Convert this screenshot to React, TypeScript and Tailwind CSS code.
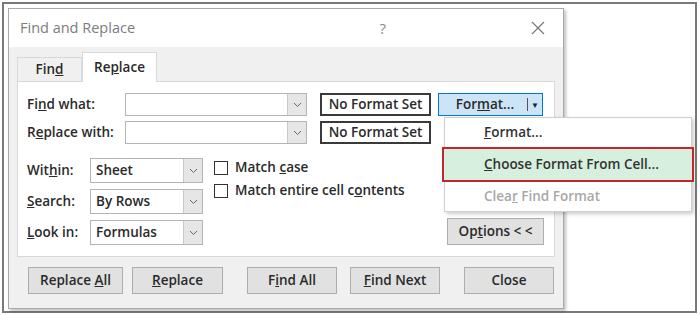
import React from 'react'

const font = { fontFamily: '"Open Sans", "Noto Sans", Arial, sans-serif' }

function Chevron() {
  return (
    <svg width="9" height="6" viewBox="0 0 9 6" className="text-[#666]">
      <path d="M1 1 L4.5 4.5 L8 1" fill="none" stroke="currentColor" strokeWidth="1" />
    </svg>
  )
}

function Combo({ w, value }: { w: string; value?: string }) {
  return (
    <div className={`${w} h-full flex border border-[#b4b4b4] bg-white`}>
      <div className="flex-1 flex items-center pl-[5px] text-[#2a2a2a]">{value}</div>
      <div className="w-[19px] flex items-center justify-center bg-[#e6e6e6] border-l border-[#c8c8c8]">
        <Chevron />
      </div>
    </div>
  )
}

function Btn({ children, w }: { children: React.ReactNode; w: string }) {
  return (
    <div className={`${w} h-[27px] flex items-center justify-center bg-[#e1e1e1] border border-[#adadad] text-[#2a2a2a]`}>
      <span>{children}</span>
    </div>
  )
}

export default function App() {
  return (
    <div className="w-[700px] h-[315px] bg-white p-[2px] text-[13.5px] font-semibold" style={font}>
      <div className="w-[695px] h-[311px] border-2 border-[#7a7a7a] p-[4px]">
        <div className="w-[556px] h-[301px] bg-[#f0f0f0] border border-[#a9a9a9] shadow-[2px_2px_3px_rgba(0,0,0,0.25)] flex flex-col">
          {/* title bar */}
          <div className="h-[38px] bg-white flex items-center pl-[11px] pr-[18px] text-[#7c7c7c] text-[14.5px] font-medium">
            <span className="flex-1">Find and Replace</span>
            <span className="text-[#8a8a8a] text-[15px] font-normal mr-[145px]">?</span>
            <svg width="14" height="14" viewBox="0 0 14 14">
              <path d="M1 1 L13 13 M13 1 L1 13" stroke="#777" strokeWidth="1.2" />
            </svg>
          </div>

          {/* tabs */}
          <div className="flex items-end pl-[8px] mt-[5px] h-[29px]">
            <div className="w-[65px] h-[24px] border border-b-0 border-[#d9d9d9] bg-[#f0f0f0] flex items-center justify-center text-[#2a2a2a]">
              <span>Fin<u>d</u></span>
            </div>
            <div className="w-[75px] h-[30px] border border-b-0 border-[#d9d9d9] bg-white flex items-center justify-center text-[#2a2a2a] -mb-px relative z-10">
              <span>Re<u>p</u>lace</span>
            </div>
          </div>

          {/* panel */}
          <div className="ml-[8px] w-[538px] h-[176px] bg-white border border-[#d9d9d9] pl-[9px] pt-[11px] relative text-[#2a2a2a]">
            <div className="flex items-center h-[23px]">
              <div className="w-[98px]">Fi<u>n</u>d what:</div>
              <Combo w="w-[182px]" />
              <div className="ml-[13px] w-[111px] h-full border-2 border-[#3a3a3a] flex items-center justify-center">No Format Set</div>
              <div className="ml-[7px] relative h-full">
                <div className="w-[105px] h-full bg-[#cce4f7] border border-[#0078d7] flex items-center">
                  <div className="flex-1 text-center pl-[4px]">For<u>m</u>at...</div>
                  <div className="w-px h-[13px] bg-[#555]" />
                  <div className="w-[14px] flex justify-center text-[8px] text-[#222]">▼</div>
                </div>
                {/* dropdown menu */}
                <div className="absolute left-[6px] top-[24px] w-[248px] h-[95px] bg-white border border-[#cfcfcf] shadow-[2px_2px_4px_rgba(0,0,0,0.2)] z-20 flex flex-col">
                  <div className="h-[29px] flex items-center pl-[39px] text-[#333]">
                    <span><u>F</u>ormat...</span>
                  </div>
                  <div className="h-[35px] -mx-[3px] bg-[#d7efdf] border-2 border-[#c0282d] flex items-center pl-[40px] text-[#333]">
                    <span><u>C</u>hoose Format From Cell...</span>
                  </div>
                  <div className="h-[29px] flex items-center pl-[39px] text-[#a8a8a8]">
                    <span>Clea<u>r</u> Find Format</span>
                  </div>
                </div>
              </div>
            </div>
            <div className="flex items-center h-[23px] mt-[5px]">
              <div className="w-[98px]">R<u>e</u>place with:</div>
              <Combo w="w-[182px]" />
              <div className="ml-[13px] w-[111px] h-full border-2 border-[#3a3a3a] flex items-center justify-center">No Format Set</div>
            </div>

            <div className="flex mt-[14px]">
              <div className="flex flex-col gap-[6px]">
                {[
                  [<>Wit<u>h</u>in:</>, 'Sheet'],
                  [<><u>S</u>earch:</>, 'By Rows'],
                  [<><u>L</u>ook in:</>, 'Formulas'],
                ].map(([label, value], i) => (
                  <div key={i} className="flex items-center h-[25px]">
                    <div className="w-[63px]">{label}</div>
                    <Combo w="w-[113px]" value={value as string} />
                  </div>
                ))}
              </div>
              <div className="ml-[11px] flex flex-col gap-[8px] pt-[2px]">
                <div className="flex items-center gap-[7px] h-[15px]">
                  <div className="w-[14px] h-[14px] border border-[#333] bg-white" />
                  <span>Match <u>c</u>ase</span>
                </div>
                <div className="flex items-center gap-[7px] h-[15px]">
                  <div className="w-[14px] h-[14px] border border-[#333] bg-white" />
                  <span>Match entire cell c<u>o</u>ntents</span>
                </div>
              </div>
              <div className="flex-1 flex justify-end items-end pr-[10px]">
                <div className="w-[97px] h-[27px] flex items-center justify-center bg-[#e1e1e1] border border-[#adadad]">
                  <span>Op<u>t</u>ions &lt; &lt;</span>
                </div>
              </div>
            </div>
          </div>

          {/* bottom buttons */}
          <div className="flex pl-[19px] mt-[10px]">
            <Btn w="w-[95px]">Replace <u>A</u>ll</Btn>
            <div className="w-[9px]" />
            <Btn w="w-[91px]"><u>R</u>eplace</Btn>
            <div className="w-[24px]" />
            <Btn w="w-[90px]">F<u>i</u>nd All</Btn>
            <div className="w-[13px]" />
            <Btn w="w-[90px]"><u>F</u>ind Next</Btn>
            <div className="w-[24px]" />
            <Btn w="w-[90px]">Close</Btn>
          </div>
        </div>
      </div>
    </div>
  )
}
